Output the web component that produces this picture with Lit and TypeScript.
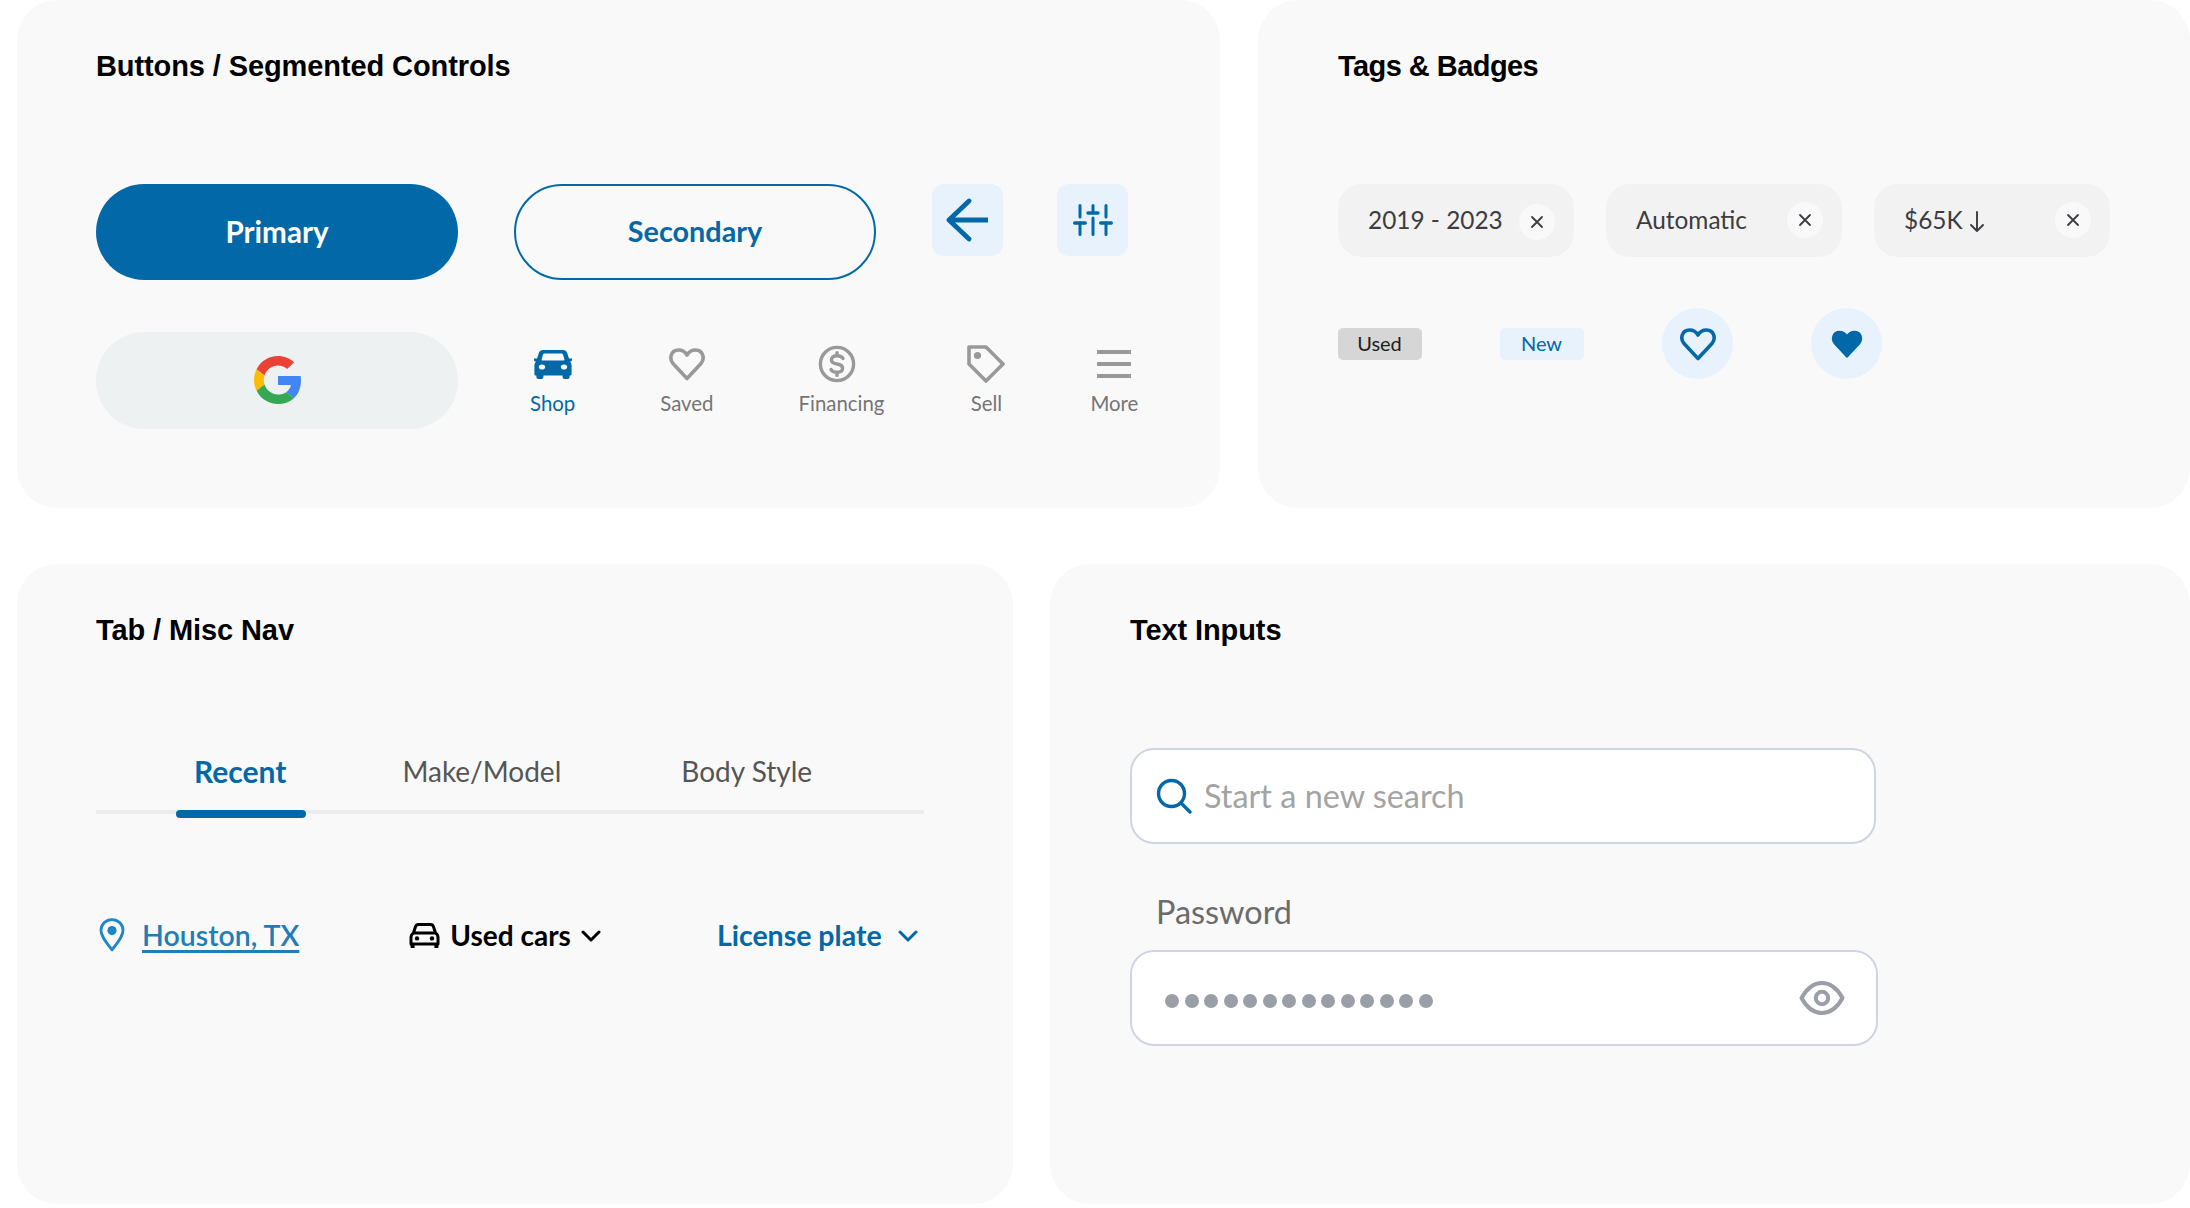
import { css, html, LitElement, svg } from "lit";
import { customElement } from "lit/decorators.js";

const carSolid = svg`<path fill-rule="evenodd" d="M9 0H29C31 0 32.6 1 33.2 3L35 8.5H37.6C38.2 8.5 38.3 9 38.2 9.5L37.9 10.6C37.7 11.3 37.2 11.6 36.6 11.6H36C37 12.8 37.6 14.2 37.6 16V24C37.6 25 37 25.6 36 25.6H35.6V27C35.6 28.2 34.8 29 33.6 29H30.6C29.4 29 28.6 28.2 28.6 27V25.6H9.4V27C9.4 28.2 8.6 29 7.4 29H4.4C3.2 29 2.4 28.2 2.4 27V25.6H2C1 25.6 .4 25 .4 24V16C.4 14.2 1 12.8 2 11.6H1.4C.8 11.6 .3 11.3 .1 10.6L-.2 9.5C-.3 9 -.2 8.5 .4 8.5H3L4.8 3C5.4 1 7 0 9 0ZM10.5 3.6C9.8 3.6 9.3 4 9 4.6L7.6 9.6C7.5 10.2 7.8 10.6 8.4 10.6H29.6C30.2 10.6 30.5 10.2 30.4 9.6L29 4.6C28.7 4 28.2 3.6 27.5 3.6ZM8 14.4C6 14.4 4.8 15.5 4.8 17C4.8 18.5 6 19.6 8 19.6C10 19.6 11.2 18.5 11.2 17C11.2 15.5 10 14.4 8 14.4ZM30 14.4C28 14.4 26.8 15.5 26.8 17C26.8 18.5 28 19.6 30 19.6C32 19.6 33.2 18.5 33.2 17C33.2 15.5 32 14.4 30 14.4Z"/>`;
const heartPath = "M19 31.5 5 16.6C1 12 2.6 3 10.6 3 14.4 3 17.2 5 19 8 20.8 5 23.6 3 27.4 3 35.4 3 37 12 33 16.6Z";

@customElement("app-root")
export class AppRoot extends LitElement {
  renderChip(label: any, low = false) {
    return html`
      <div class="chip">
        <span class="chip-text">${label}</span>
        <span class="chip-x ${low ? "low" : ""}">
          <svg width="14" height="14" viewBox="0 0 14 14" fill="none" stroke="#3c3c41" stroke-width="1.8" stroke-linecap="round"><path d="M2 2 12 12M12 2 2 12"/></svg>
        </span>
      </div>
    `;
  }

  renderNavItem(label: string, icon: any, active = false) {
    return html`
      <div class="nav-item ${active ? "active" : ""}">
        <span class="nav-icon">${icon}</span>
        <span>${label}</span>
      </div>
    `;
  }

  renderChevron() {
    return html`<svg width="20" height="13" viewBox="0 0 20 13" fill="none" stroke="currentColor" stroke-width="3" stroke-linecap="round" stroke-linejoin="round"><path d="M2 3 10 11 18 3"/></svg>`;
  }

  render() {
    return html`
      <div class="row top">
        <section class="card">
          <h2>Buttons / Segmented Controls</h2>
          <div class="btn-row">
            <button class="pill primary">Primary</button>
            <button class="pill secondary">Secondary</button>
            <div class="square first">
              <svg width="44" height="44" viewBox="0 0 44 44" fill="none" stroke="#0268a8" stroke-width="4.8" stroke-linecap="round" stroke-linejoin="round"><path d="M23 3 3 22 23 41"/><path d="M3 22H42" stroke-linecap="butt"/></svg>
            </div>
            <div class="square">
              <svg width="40" height="32" viewBox="0 0 40 32" fill="none" stroke="#0268a8" stroke-width="3" stroke-linecap="round"><path d="M7 1.5V13M7 19V30.5M20 1.5V9M20 14V30.5M33 1.5V13M33 19V30.5"/><path stroke-width="3.4" d="M1.7 19H12.3M15 9H25M27.7 19H38.3"/></svg>
            </div>
          </div>
          <div class="btn-row second">
            <div class="pill google">
              <svg width="48" height="48" viewBox="0 0 48 48">
                <path fill="#EA4335" d="M24 9.5c3.54 0 6.71 1.22 9.21 3.6l6.85-6.85C35.9 2.38 30.47 0 24 0 14.62 0 6.51 5.38 2.56 13.22l7.98 6.19C12.43 13.72 17.74 9.5 24 9.5z"/>
                <path fill="#4285F4" d="M46.98 24.55c0-1.57-.15-3.09-.38-4.55H24v9.02h12.94c-.58 2.96-2.26 5.48-4.78 7.18l7.73 6c4.51-4.18 7.09-10.36 7.09-17.65z"/>
                <path fill="#FBBC05" d="M10.53 28.59c-.48-1.45-.76-2.99-.76-4.59s.27-3.14.76-4.59l-7.98-6.19C.92 16.46 0 20.12 0 24c0 3.88.92 7.54 2.56 10.78l7.97-6.19z"/>
                <path fill="#34A853" d="M24 48c6.48 0 11.93-2.13 15.89-5.81l-7.73-6c-2.15 1.45-4.92 2.3-8.16 2.3-6.26 0-11.57-4.22-13.47-9.91l-7.98 6.19C6.51 42.62 14.62 48 24 48z"/>
              </svg>
            </div>
            <nav class="nav">
              ${this.renderNavItem("Shop", html`<svg width="38" height="29" viewBox="0 0 38 29" fill="#0268a8">${carSolid}</svg>`, true)}
              ${this.renderNavItem("Saved", html`<svg width="38" height="34" viewBox="0 0 38 34" fill="none" stroke="#999" stroke-width="3.6" stroke-linejoin="round"><path d=${heartPath}/></svg>`)}
              ${this.renderNavItem("Financing", html`<svg class="shift" width="38" height="38" viewBox="0 0 38 38" fill="none" stroke="#999" stroke-width="3.4" stroke-linecap="round"><circle cx="19" cy="19" r="16.6"/><path d="M25 13.6C24 11.6 22 10.8 19 10.8 15.6 10.8 13.4 12.4 13.4 15 13.4 17.6 15.6 18.4 19 19 22.4 19.6 24.6 20.6 24.6 23.2 24.6 25.8 22.4 27.2 19 27.2 16 27.2 14 26.4 13 24.4M19 7.6V10.8M19 27.2V30.4"/></svg>`)}
              ${this.renderNavItem("Sell", html`<svg width="38" height="38" viewBox="0 0 38 38" fill="none" stroke="#999" stroke-width="3.6" stroke-linejoin="round"><path d="M2 2H19L36 19 19 36 2 19Z"/><circle cx="10.5" cy="10.5" r="3.6" fill="#999" stroke="none"/></svg>`)}
              ${this.renderNavItem("More", html`<svg width="34" height="28" viewBox="0 0 34 28" fill="#999"><rect width="34" height="4"/><rect y="12" width="34" height="4"/><rect y="24" width="34" height="4"/></svg>`)}
            </nav>
          </div>
        </section>

        <section class="card right">
          <h2 class="tight">Tags &amp; Badges</h2>
          <div class="chips">
            ${this.renderChip("2019 - 2023", true)}
            ${this.renderChip("Automatic")}
            ${this.renderChip(html`$65K <svg class="down" width="16" height="22" viewBox="0 0 16 22" fill="none" stroke="#3c3c41" stroke-width="1.9" stroke-linecap="round" stroke-linejoin="round"><path d="M8 1V20M2 14 8 20 14 14"/></svg>`)}
          </div>
          <div class="badges">
            <span class="badge used">Used</span>
            <span class="badge new">New</span>
            <span class="fav first-fav">
              <svg width="38" height="34" viewBox="0 0 38 34" fill="none" stroke="#0268a8" stroke-width="3.6" stroke-linejoin="round"><path d=${heartPath}/></svg>
            </span>
            <span class="fav">
              <svg width="34" height="30" viewBox="0 0 38 34" fill="#0268a8" stroke="#0268a8" stroke-width="2" stroke-linejoin="round"><path d=${heartPath}/></svg>
            </span>
          </div>
        </section>
      </div>

      <div class="row bottom">
        <section class="card">
          <h2>Tab / Misc Nav</h2>
          <div class="tabs">
            <div class="tab current">Recent</div>
            <div class="tab make">Make/Model</div>
            <div class="tab body">Body Style</div>
          </div>
          <div class="misc">
            <div class="location">
              <svg width="26" height="34" viewBox="0 0 26 34" fill="none" stroke="#1f87c6" stroke-width="2.8" stroke-linejoin="round"><path d="M13 32C7 24 2 18.6 2 12.6 2 6 7 1.6 13 1.6S24 6 24 12.6C24 18.6 19 24 13 32Z"/><circle cx="13" cy="12.6" r="4.6" fill="#1f87c6" stroke="none"/></svg>
              <a>Houston, TX</a>
            </div>
            <div class="used-cars">
              <svg width="31" height="25" viewBox="0 0 31 25" fill="none" stroke="#000" stroke-width="3" stroke-linejoin="round"><path d="M2 21V14C2 12 3 11 4.4 10L6.6 3.6C7 2.4 8 1.6 9.4 1.6H21.6C23 1.6 24 2.4 24.4 3.6L26.6 10C28 11 29 12 29 14V21ZM4.4 10H26.6"/><path stroke-width="4" d="M3.6 20V25M27.4 20V25"/><circle cx="8" cy="15.4" r="2.2" fill="#000" stroke="none"/><circle cx="23" cy="15.4" r="2.2" fill="#000" stroke="none"/></svg>
              <span>Used cars</span>
              ${this.renderChevron()}
            </div>
            <div class="plate">
              <span>License plate</span>
              ${this.renderChevron()}
            </div>
          </div>
        </section>

        <section class="card right">
          <h2>Text Inputs</h2>
          <label class="field search">
            <svg width="36" height="36" viewBox="0 0 36 36" fill="none" stroke="#0268a8" stroke-width="3.4" stroke-linecap="round"><circle cx="15.5" cy="15.5" r="13"/><path d="M25 25 34 34"/></svg>
            <input placeholder="Start a new search" />
          </label>
          <div class="label">Password</div>
          <div class="field password">
            <div class="dots">${Array.from({ length: 14 }, () => html`<i></i>`)}</div>
            <svg width="46" height="34" viewBox="0 0 46 34" fill="none" stroke="#9a9ea6" stroke-width="4" stroke-linejoin="round"><path d="M2.5 17C8 7 15 2 23 2S38 7 43.5 17C38 27 31 32 23 32S8 27 2.5 17Z"/><circle cx="23" cy="17" r="6.2"/></svg>
          </div>
        </section>
      </div>
    `;
  }

  static styles = css`
    :host {
      display: block;
      width: 2190px;
      height: 1208px;
      overflow: hidden;
      background: #fff;
      font-family: Lato, "Liberation Sans", sans-serif;
      --blue: #0268a8;
      --pale: #e8f2fc;
      white-space: nowrap;
    }

    .row {
      display: grid;
      padding-left: 17px;
    }

    .top {
      grid-template-columns: 1203px 932px;
      column-gap: 38px;
      height: 508px;
      margin-bottom: 56px;
    }

    .bottom {
      grid-template-columns: 996px 1140px;
      column-gap: 37px;
      height: 640px;
    }

    .card {
      background: #f9f9f9;
      border-radius: 40px;
      padding: 48px 0 0 79px;
    }

    .card.right {
      padding-left: 80px;
    }

    h2 {
      margin: 0;
      height: 36px;
      font: 700 29px/36px "Liberation Sans", sans-serif;
      letter-spacing: -0.1px;
      color: #000;
    }

    h2.tight {
      letter-spacing: -0.55px;
    }

    .btn-row {
      display: flex;
      align-items: flex-start;
      margin-top: 100px;
    }

    .btn-row.second {
      margin-top: 52px;
    }

    .pill {
      box-sizing: border-box;
      width: 362px;
      height: 96px;
      border-radius: 48px;
      border: 0;
      padding: 0 0 2px;
      font: 700 29.6px Lato, sans-serif;
      display: flex;
      align-items: center;
      justify-content: center;
    }

    .primary {
      background: var(--blue);
      color: #fff;
      margin-right: 56px;
    }

    .secondary {
      background: transparent;
      border: 2px solid var(--blue);
      color: var(--blue);
      margin-right: 56px;
      font-size: 28.8px;
    }

    .square {
      width: 71px;
      height: 72px;
      border-radius: 12px;
      background: var(--pale);
      display: flex;
      align-items: center;
      justify-content: center;
    }

    .square.first {
      margin-right: 54px;
    }

    .google {
      height: 97px;
      background: #eef1f2;
      margin-right: 72px;
      padding-left: 1px;
    }

    .nav {
      display: flex;
      gap: 85px;
      padding-top: 11px;
    }

    .nav-item {
      display: flex;
      flex-direction: column;
      align-items: center;
      font-size: 20.4px;
      line-height: 24px;
      color: #757575;
    }

    .nav-item:nth-child(4) {
      margin-left: -2px;
    }

    .nav-item.active {
      color: var(--blue);
    }

    .nav-icon {
      height: 42px;
      margin-bottom: 6px;
      display: flex;
      align-items: center;
    }

    .nav-icon .shift {
      margin-right: 8px;
    }

    .chips {
      display: flex;
      gap: 32px;
      margin-top: 100px;
    }

    .chip {
      box-sizing: border-box;
      width: 236px;
      height: 73px;
      padding: 0 19px 0 30px;
      border-radius: 24px;
      background: #f2f2f2;
      color: #3c3c41;
      font-size: 24.4px;
      display: flex;
      align-items: center;
      justify-content: space-between;
    }

    .chip-text {
      margin-bottom: 3px;
    }

    .chip-x {
      width: 36px;
      height: 36px;
      border-radius: 50%;
      background: #f9f9f9;
      display: flex;
      align-items: center;
      justify-content: center;
      margin-bottom: 1px;
    }

    .chip-x.low {
      margin: 2px 0 0;
    }

    .down {
      vertical-align: -4px;
    }

    .badges {
      display: flex;
      align-items: center;
      margin-top: 51px;
    }

    .badge {
      box-sizing: border-box;
      width: 84px;
      height: 32px;
      border-radius: 5px;
      font-size: 20px;
      padding: 0 1px 2px 0;
      display: flex;
      align-items: center;
      justify-content: center;
    }

    .used {
      background: #d6d6d6;
      color: #1e1e1e;
      margin-right: 78px;
    }

    .new {
      background: var(--pale);
      color: var(--blue);
      margin-right: 78px;
    }

    .fav {
      width: 71px;
      height: 71px;
      border-radius: 50%;
      background: var(--pale);
      display: flex;
      align-items: center;
      justify-content: center;
    }

    .first-fav {
      margin-right: 78px;
    }

    .tabs {
      position: relative;
      width: 828px;
      height: 61px;
      margin-top: 101px;
      border-bottom: 4px solid #ececec;
      display: flex;
      font-size: 28px;
      color: #555;
    }

    .tab {
      line-height: 40px;
      padding-top: 2px;
    }

    .tab.current {
      margin-left: 98px;
      color: var(--blue);
      font-size: 30px;
      font-weight: 700;
    }

    .tab.current::after {
      content: "";
      position: absolute;
      left: 80px;
      bottom: -8px;
      width: 130px;
      height: 8px;
      border-radius: 4px;
      background: var(--blue);
    }

    .tab.make {
      margin-left: 116px;
    }

    .tab.body {
      margin-left: 120px;
    }

    .misc {
      display: flex;
      align-items: center;
      width: 828px;
      margin-top: 101px;
      font-size: 28.5px;
      font-weight: 700;
      height: 40px;
    }

    .location {
      display: flex;
      align-items: center;
      gap: 17px;
      margin-left: 3px;
      color: #1f7eb5;
    }

    .location a {
      text-decoration: underline;
      text-underline-offset: 4px;
      text-decoration-thickness: 2.5px;
      font-weight: 600;
    }

    .used-cars {
      display: flex;
      align-items: center;
      color: #000;
      margin-left: 110px;
      gap: 10px;
      font-size: 28px;
      font-weight: 700;
    }

    .plate {
      display: flex;
      align-items: center;
      color: var(--blue);
      margin-left: 116px;
      gap: 16px;
    }

    .field {
      box-sizing: border-box;
      height: 96px;
      background: #fff;
      border: 2px solid #cfd5e0;
      border-radius: 24px;
      display: flex;
      align-items: center;
    }

    .search {
      width: 746px;
      margin-top: 100px;
      padding-left: 24px;
      gap: 12px;
    }

    .search input {
      flex: 1;
      border: 0;
      outline: 0;
      background: transparent;
      padding: 0;
      margin-bottom: 2px;
      font: 32.4px Lato, sans-serif;
    }

    .search input::placeholder {
      color: #a3a3a3;
      opacity: 1;
    }

    .label {
      margin: 47px 0 17px 26px;
      height: 42px;
      font-size: 32.4px;
      line-height: 42px;
      color: #6b6b6b;
    }

    .password {
      width: 748px;
      padding: 0 31px 0 33px;
      justify-content: space-between;
    }

    .dots {
      display: flex;
      gap: 5.5px;
      padding-top: 5px;
    }

    .dots i {
      width: 14px;
      height: 14px;
      border-radius: 50%;
      background: #9a9ea6;
    }
  `;
}
